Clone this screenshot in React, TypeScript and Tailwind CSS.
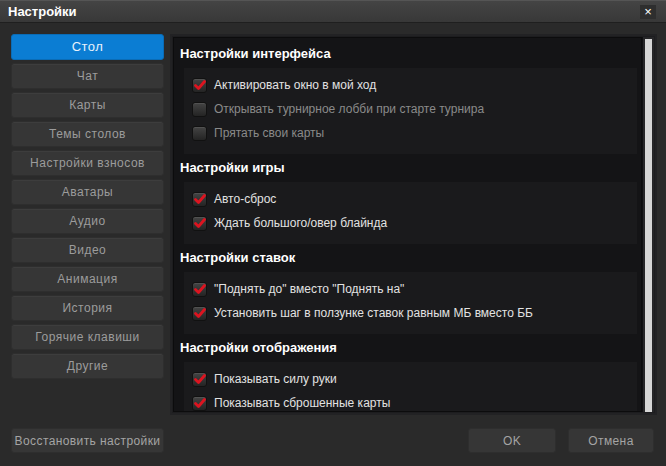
import React from "react"

const navItems = [
	"Стол",
	"Чат",
	"Карты",
	"Темы столов",
	"Настройки взносов",
	"Аватары",
	"Аудио",
	"Видео",
	"Анимация",
	"История",
	"Горячие клавиши",
	"Другие",
]

const sections = [
	{
		title: "Настройки интерфейса",
		rows: [
			{ label: "Активировать окно в мой ход", checked: true },
			{ label: "Открывать турнирное лобби при старте турнира", checked: false },
			{ label: "Прятать свои карты", checked: false },
		],
	},
	{
		title: "Настройки игры",
		rows: [
			{ label: "Авто-сброс", checked: true },
			{ label: "Ждать большого/овер блайнда", checked: true },
		],
	},
	{
		title: "Настройки ставок",
		rows: [
			{ label: "\"Поднять до\" вместо \"Поднять на\"", checked: true },
			{ label: "Установить шаг в ползунке ставок равным МБ вместо ББ", checked: true },
		],
	},
	{
		title: "Настройки отображения",
		rows: [
			{ label: "Показывать силу руки", checked: true },
			{ label: "Показывать сброшенные карты", checked: true },
		],
	},
]

function Checkbox({ checked }: { checked: boolean }) {
	return (
		<div className="w-[15px] h-[15px] rounded-[3px] bg-gradient-to-b from-[#444444] to-[#242424] border border-[#111] shadow-[inset_0_1px_0_rgba(255,255,255,0.08)] flex items-center justify-center shrink-0">
			{checked && (
				<svg width="12" height="11" viewBox="0 0 12 11">
					<path d="M1.5 5.5 L4.5 8.5 L10.5 1.5" fill="none" stroke="#dc1420" strokeWidth="2.8" strokeLinecap="round" strokeLinejoin="round" />
				</svg>
			)}
		</div>
	)
}

function NavButton({ label, active }: { label: string; active?: boolean }) {
	return (
		<div
			className={
				active
					? "h-[26px] rounded-[3px] bg-[#0b7dd3] border border-[#0a6cb6] flex items-center justify-center text-[13px] text-[#e8f2fb] tracking-[0.4px]"
					: "h-[26px] rounded-[3px] bg-[#363636] border border-[#2e2e2e] shadow-[inset_0_1px_0_rgba(255,255,255,0.04)] flex items-center justify-center text-[12px] text-[#9c9c9c] tracking-[0.5px]"
			}
		>
			{label}
		</div>
	)
}

function FooterButton({ label, className }: { label: string; className?: string }) {
	return (
		<div className={"h-[25px] rounded-[3px] bg-[#363636] border border-[#2e2e2e] flex items-center justify-center text-[12px] text-[#a4a4a4] tracking-[0.4px] " + (className ?? "")}>
			{label}
		</div>
	)
}

export default function App() {
	return (
		<div className="w-[666px] h-[466px] bg-[#2a2a2a] flex flex-col overflow-hidden select-none" style={{ fontFamily: '"Liberation Sans", Arial, sans-serif' }}>
			{/* Title bar */}
			<div className="h-[23px] shrink-0 bg-gradient-to-b from-[#444444] to-[#383838] border-t border-[#555] border-b border-b-[#1f1f1f] flex items-center justify-between pl-[8px] pr-[10px]">
				<span className="text-[13px] font-bold text-white">Настройки</span>
				<div className="w-[16px] h-[14px] bg-[#2e2e2e] flex items-center justify-center text-white text-[13px] leading-none">×</div>
			</div>

			{/* Body */}
			<div className="flex gap-[6px] pl-[11px] pr-[9px] pt-[11px] h-[392px]">
				<div className="w-[153px] shrink-0 flex flex-col gap-[3px]">
					{navItems.map((item, i) => (
						<NavButton key={item} label={item} active={i === 0} />
					))}
				</div>

				<div className="flex-1 border-[2px] border-[#222224] bg-[#1d1d1f] p-[1px] flex">
					<div className="flex-1 bg-[#141416] border border-[#0c0c0d] pt-[2px] pl-[6px] pr-[4px] overflow-hidden">
						{sections.map((s) => (
							<div key={s.title}>
								<div className="h-[28px] flex items-center text-[13px] font-bold text-white">{s.title}</div>
								<div className="ml-[4px] bg-[#1a1a1c] pt-[5px] pb-[9px] pl-[8px]">
									{s.rows.map((r) => (
										<div key={r.label} className="h-[24px] flex items-center gap-[7px]">
											<Checkbox checked={r.checked} />
											<span className={r.checked ? "text-[12px] text-[#e2e2e2]" : "text-[12px] text-[#8a8a8a]"}>{r.label}</span>
										</div>
									))}
								</div>
							</div>
						))}
					</div>
					<div className="w-[12px] shrink-0 bg-[#262628] border-l border-[#101012] flex justify-center pt-[2px]">
						<div className="w-[7px] h-full bg-[#d6d6d6]" />
					</div>
				</div>
			</div>

			{/* Footer */}
			<div className="flex items-center pl-[11px] pr-[12px] pt-[13px]">
				<FooterButton label="Восстановить настройки" className="w-[153px]" />
				<div className="flex-1" />
				<FooterButton label="OK" className="w-[88px]" />
				<FooterButton label="Отмена" className="w-[86px] ml-[12px]" />
			</div>
		</div>
	)
}
